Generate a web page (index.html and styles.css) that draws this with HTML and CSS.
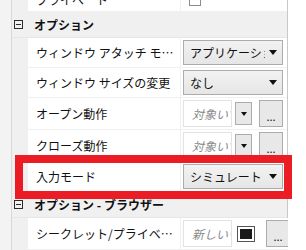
FILE: index.html
```html
<!DOCTYPE html>
<html lang="ja">
<head>
    <meta charset="UTF-8">
    <meta name="viewport" content="width=device-width, initial-scale=1.0">
    <title>プロパティ</title>
    <link rel="stylesheet" href="styles.css">
</head>
<body>

    <div class="page">
        <div class="strip"></div>

        <!-- Property grid -->
        <div class="grid">
            <div class="row short">
                <div class="indent"></div>
                <div class="name">プライベート</div>
                <div class="value"><span class="check"></span></div>
            </div>

            <div class="cat">
                <span class="toggle"></span>
                <span class="cat-title">オプション</span>
            </div>

            <div class="row">
                <div class="indent"></div>
                <div class="name">ウィンドウ アタッチ モード</div>
                <div class="value">
                    <div class="combo"><span class="combo-text">アプリケーション</span><span class="arrow"></span></div>
                </div>
            </div>

            <div class="row">
                <div class="indent"></div>
                <div class="name">ウィンドウ サイズの変更</div>
                <div class="value">
                    <div class="combo"><span class="combo-text">なし</span><span class="arrow"></span></div>
                </div>
            </div>

            <div class="row tall">
                <div class="indent"></div>
                <div class="name">オープン動作</div>
                <div class="value">
                    <div class="field">対象いずれか</div>
                    <div class="drop"><span class="arrow small"></span></div>
                    <div class="more">...</div>
                </div>
            </div>

            <div class="row tall">
                <div class="indent"></div>
                <div class="name">クローズ動作</div>
                <div class="value">
                    <div class="field">対象いずれか</div>
                    <div class="drop"><span class="arrow small"></span></div>
                    <div class="more">...</div>
                </div>
            </div>

            <div class="row">
                <div class="indent"></div>
                <div class="name">入力モード</div>
                <div class="value">
                    <div class="combo"><span class="combo-text">シミュレート</span><span class="arrow"></span></div>
                </div>
            </div>

            <div class="cat">
                <span class="toggle"></span>
                <span class="cat-title">オプション - ブラウザー</span>
            </div>

            <div class="row tall">
                <div class="indent"></div>
                <div class="name">シークレット/プライベート</div>
                <div class="value">
                    <div class="field">新しいウィンドウ</div>
                    <div class="swatch"><span></span></div>
                    <div class="more">...</div>
                </div>
            </div>
        </div>

        <div class="side"></div>
    </div>

    <!-- Highlight frame -->
    <div class="mark"></div>

</body>
</html>
```

FILE: styles.css
```css
* {
    margin: 0;
    padding: 0;
    box-sizing: border-box;
}

body {
    font-family: 'Noto Sans CJK JP', sans-serif;
    font-size: 12px;
    color: #111;
    background-color: #fff;
    width: 306px;
    height: 250px;
    overflow: hidden;
    position: relative;
}

.page {
    display: flex;
    height: 250px;
    overflow: hidden;
}

.strip {
    width: 12px;
    flex-shrink: 0;
    background-color: #f3f3f3;
    border-right: 1px solid #d9d9d9;
}

.grid {
    width: 276px;
    flex-shrink: 0;
    margin-top: -12px;
    background-color: #f0f0f0;
    border-right: 1px solid #c9c9c9;
    display: flex;
    flex-direction: column;
}

.side {
    flex: 1;
    background-color: #fff;
}

/* Rows */
.row {
    display: flex;
    height: 30px;
    flex-shrink: 0;
}

.row.short {
    height: 24px;
}

.row.tall {
    height: 32px;
}

.indent {
    width: 16px;
    flex-shrink: 0;
}

.name {
    width: 152px;
    flex-shrink: 0;
    background-color: #fff;
    border-bottom: 1px solid #f0f0f0;
    padding: 0 6px 0 8px;
    white-space: nowrap;
    overflow: hidden;
    text-overflow: ellipsis;
    line-height: 29px;
}

.row.short .name {
    line-height: 23px;
}

.row.tall .name {
    line-height: 31px;
}

.value {
    flex: 1;
    background-color: #fff;
    border-left: 1px solid #f0f0f0;
    border-bottom: 1px solid #f0f0f0;
    padding: 2px 4px 2px 2px;
    display: flex;
    align-items: center;
}

/* Category headers */
.cat {
    display: flex;
    align-items: center;
    height: 26px;
    flex-shrink: 0;
    padding-left: 2px;
    border-bottom: 1px solid #e6e6e6;
}

.toggle {
    width: 9px;
    height: 9px;
    border: 1px solid #2b2b2b;
    position: relative;
    margin-right: 11px;
}

.toggle::after {
    content: '';
    position: absolute;
    left: 1px;
    top: 3px;
    width: 5px;
    height: 1px;
    background-color: #2b2b2b;
}

.cat-title {
    font-weight: bold;
    white-space: nowrap;
}

/* Editors */
.check {
    width: 12px;
    height: 12px;
    margin-left: 6px;
    border: 1px solid #8c8c8c;
    background-color: #fff;
}

.combo {
    width: 100px;
    height: 25px;
    border: 1px solid #acacac;
    background: linear-gradient(#f2f2f2, #e6e6e6);
    display: flex;
    align-items: center;
    padding: 0 5px 0 6px;
}

.combo-text {
    flex: 1;
    overflow: hidden;
    white-space: nowrap;
}

.arrow {
    width: 0;
    height: 0;
    border-left: 4px solid transparent;
    border-right: 4px solid transparent;
    border-top: 5px solid #111;
    margin-left: 4px;
}

.arrow.small {
    margin: 0;
    border-left-width: 3px;
    border-right-width: 3px;
    border-top-width: 4px;
}

.field {
    width: 49px;
    height: 27px;
    border: 1px solid #e3e3e3;
    background-color: #fff;
    color: #8a8a8a;
    font-style: italic;
    padding-left: 8px;
    line-height: 25px;
    white-space: nowrap;
    overflow: hidden;
}

.drop {
    width: 17px;
    height: 23px;
    margin-left: 3px;
    border: 1px solid #acacac;
    background-color: #e8e8e8;
    display: flex;
    align-items: center;
    justify-content: center;
}

.more {
    width: 24px;
    height: 27px;
    margin-left: 7px;
    border: 1px solid #acacac;
    background-color: #e8e8e8;
    text-align: center;
    line-height: 30px;
    font-size: 11px;
}

.swatch {
    width: 18px;
    height: 16px;
    margin: 0 4px 0 5px;
    border: 1px solid #555;
    background-color: #fff;
    padding: 2px;
}

.swatch span {
    display: block;
    width: 100%;
    height: 100%;
    background-color: #1a1a1a;
}

/* Red annotation frame over the selected row */
.mark {
    position: absolute;
    left: 15px;
    top: 155px;
    width: 277px;
    height: 44px;
    border: 8px solid #ec1c24;
}
```
